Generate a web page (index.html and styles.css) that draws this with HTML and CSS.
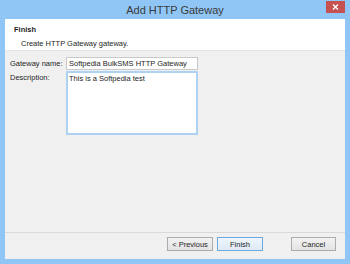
FILE: index.html
```html
<!DOCTYPE html>
<html lang="en">
<head>
    <meta charset="UTF-8">
    <title>Add HTTP Gateway</title>
    <link rel="stylesheet" href="styles.css">
</head>
<body>
<div class="window">
    <div class="titlebar">
        <span></span>
        <span class="title">Add HTTP Gateway</span>
        <span class="close">
            <svg width="7" height="6" viewBox="0 0 7 6"><path d="M1 0.5 L6 5.5 M6 0.5 L1 5.5" stroke="#fff" stroke-width="1.4"/></svg>
        </span>
    </div>
    <div class="client">
        <div class="header">
            <div class="step">Finish</div>
            <div class="sub">Create HTTP Gateway gateway.</div>
        </div>
        <div class="form">
            <div class="row">
                <label>Gateway name:</label>
                <input type="text" class="field" value="Softpedia BulkSMS HTTP Gateway">
            </div>
            <div class="row">
                <label>Description:</label>
                <textarea class="field area">This is a Softpedia test</textarea>
            </div>
        </div>
        <div class="footer">
            <button class="btn">&lt; Previous</button>
            <button class="btn default">Finish</button>
            <button class="btn cancel">Cancel</button>
        </div>
    </div>
</div>
</body>
</html>
```

FILE: styles.css
```css
body {
    margin: 0;
    font-family: "Liberation Sans", Arial, sans-serif;
    font-size: 7.5px;
    color: #1e1e1e;
}
.window {
    width: 350px;
    height: 264px;
    background: #8fc6f5;
    display: flex;
    flex-direction: column;
}
.titlebar {
    height: 19px;
    display: grid;
    grid-template-columns: 1fr auto 1fr;
}
.title {
    font-size: 11px;
    color: #3a3a3a;
    line-height: 20px;
}
.close {
    justify-self: end;
    width: 19px;
    height: 12px;
    margin: 1px 5px 0 0;
    background: #c75050;
    display: flex;
    align-items: center;
    justify-content: center;
}
.client {
    flex: 1;
    margin: 0 5px 5px 5px;
    background: #f0f0f0;
    display: flex;
    flex-direction: column;
}
.header {
    height: 32px;
    background: #fff;
    border-bottom: 1px solid #e3e3e3;
    padding: 5px 0 0 9px;
    box-sizing: border-box;
}
.step {
    font-weight: bold;
    height: 12px;
    line-height: 12px;
}
.sub {
    padding-left: 7px;
    margin-top: 2px;
    line-height: 12px;
}
.form {
    flex: 1;
    padding: 6px 0 0 5px;
}
.row {
    display: flex;
    margin-bottom: 1px;
}
.row label {
    width: 56px;
    flex-shrink: 0;
    white-space: nowrap;
    line-height: 13px;
}
.field {
    width: 132px;
    height: 13px;
    box-sizing: border-box;
    border: 1px solid #c9c9c9;
    background: #fff;
    font: 7.5px "Liberation Sans", Arial, sans-serif;
    color: #1e1e1e;
    padding: 0 2px;
    margin: 0;
}
.area {
    height: 64px;
    border: 2px solid #aed2f3;
    padding: 1px 1px;
    resize: none;
    outline: none;
}
.footer {
    height: 27px;
    border-top: 1px solid #dadada;
    box-sizing: border-box;
    display: flex;
    justify-content: flex-end;
    padding: 4px 9px 0 0;
    gap: 4px;
}
.btn {
    width: 46px;
    height: 14px;
    box-sizing: border-box;
    border: 1px solid #acacac;
    background: linear-gradient(#f2f2f2, #e3e3e3);
    font: 7.5px "Liberation Sans", Arial, sans-serif;
    color: #1e1e1e;
    padding: 0;
}
.default {
    border-color: #6fa9e2;
    background: linear-gradient(#eef5fc, #dde9f5);
}
.cancel {
    width: 45px;
    margin-left: 24px;
}
```
